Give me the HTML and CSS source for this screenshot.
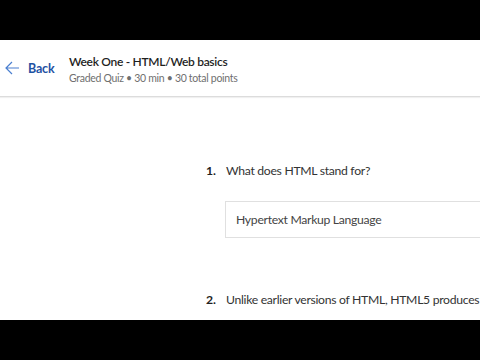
FILE: index.html
```html
<!DOCTYPE html>
<html>
<head>
<meta charset="utf-8">
<link rel="stylesheet" href="styles.css">
</head>
<body>
<div class="frame">
  <div class="bar"></div>
  <div class="screen">
    <header class="header">
      <a class="back">
        <svg class="arrow" width="15" height="14" viewBox="0 0 15 14"><path d="M7 1 L1 7 L7 13 M1 7 H14" fill="none" stroke="#4a7fd0" stroke-width="1.2"/></svg>
        <span>Back</span>
      </a>
      <div class="titles">
        <div class="title">Week One - HTML/Web basics</div>
        <div class="meta">Graded Quiz • 30 min • 30 total points</div>
      </div>
    </header>
    <main class="quiz">
      <div class="question">
        <div class="qrow"><span class="num">1.</span><span class="qtext">What does HTML stand for?</span></div>
        <div class="answer">Hypertext Markup Language</div>
      </div>
      <div class="question q2">
        <div class="qrow"><span class="num">2.</span><span class="qtext">Unlike earlier versions of HTML, HTML5 produces</span></div>
      </div>
    </main>
  </div>
  <div class="bar"></div>
</div>
</body>
</html>
```
FILE: styles.css
```css
html, body { margin: 0; padding: 0; background: #000; }
.frame { width: 480px; height: 360px; display: flex; flex-direction: column; overflow: hidden; }
.bar { height: 40px; background: #000; flex: none; }
.screen { height: 280px; background: #fff; flex: none; overflow: hidden; font-family: Lato, "Open Sans", sans-serif; }
.header { height: 57px; box-sizing: border-box; border-bottom: 1px solid #dcdcdc; box-shadow: 0 1px 1px rgba(0,0,0,0.06); display: flex; align-items: center; padding-left: 5px; }
.back { display: flex; align-items: center; gap: 8px; color: #1f52a3; font-weight: 700; font-size: 12.5px; width: 64px; letter-spacing: -0.2px; }
.arrow { display: block; }
.titles { display: flex; flex-direction: column; gap: 3px; margin-top: 2px; }
.title { font-size: 12px; font-weight: 600; color: #1f1f1f; letter-spacing: -0.3px; }
.meta { font-size: 10.5px; color: #6f6f6f; letter-spacing: -0.3px; }
.quiz { padding: 66px 0 0 206px; }
.qrow { display: flex; align-items: baseline; font-size: 12.2px; color: #333; white-space: nowrap; }
.num { font-weight: 700; width: 20px; color: #222; }
.qtext { letter-spacing: -0.3px; }
.answer { margin: 23px 0 0 19px; height: 37px; box-sizing: border-box; border: 1px solid #e0e0e0; border-right: none; display: flex; align-items: center; padding-left: 10px; font-size: 12.2px; color: #444; letter-spacing: -0.3px; width: 300px; }
.q2 { margin-top: 54px; }
```
